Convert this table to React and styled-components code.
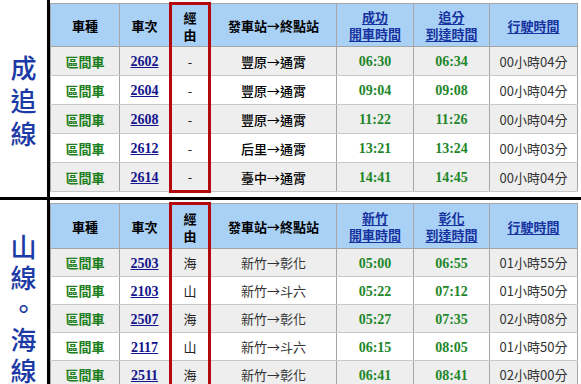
import React from 'react'
import styled, { createGlobalStyle } from 'styled-components'

const GlobalStyle = createGlobalStyle`
    html, body {
        margin: 0;
        padding: 0;
        background: #fff;
    }
    body {
        font-family: "Liberation Serif", "Noto Sans CJK TC", serif;
    }
`

const lines = [
    {
        label: ['成', '追', '線'],
        labelTop: 50,
        labelGap: 33,
        from: '成功',
        to: '追分',
        rows: [
            ['2602', '-', '豐原→通霄', '06:30', '06:34', '00小時04分'],
            ['2604', '-', '豐原→通霄', '09:04', '09:08', '00小時04分'],
            ['2608', '-', '豐原→通霄', '11:22', '11:26', '00小時04分'],
            ['2612', '-', '后里→通霄', '13:21', '13:24', '00小時03分'],
            ['2614', '-', '臺中→通霄', '14:41', '14:45', '00小時04分'],
        ],
    },
    {
        label: ['山', '線', '。', '海', '線'],
        labelTop: 30,
        labelGap: 31,
        from: '新竹',
        to: '彰化',
        rows: [
            ['2503', '海', '新竹→彰化', '05:00', '06:55', '01小時55分'],
            ['2103', '山', '新竹→斗六', '05:22', '07:12', '01小時50分'],
            ['2507', '海', '新竹→彰化', '05:27', '07:35', '02小時08分'],
            ['2117', '山', '新竹→斗六', '06:15', '08:05', '01小時50分'],
            ['2511', '海', '新竹→彰化', '06:41', '08:41', '02小時00分'],
        ],
    },
]

const RED = '#b3080c'

function App() {
    return (
        <>
            <GlobalStyle />
            <Page>
                {lines.map((line, i) => (
                    <Section key={i} $first={i === 0}>
                        <Label $top={line.labelTop} $gap={line.labelGap}>
                            {line.label.map((c, j) => (
                                <React.Fragment key={j}>{j > 0 && <br />}{c}</React.Fragment>
                            ))}
                        </Label>
                        <TableWrap $first={i === 0}>
                            <Table>
                                <colgroup>
                                    <col style={{ width: 69 }} />
                                    <col style={{ width: 51 }} />
                                    <col style={{ width: 39 }} />
                                    <col style={{ width: 127 }} />
                                    <col style={{ width: 77 }} />
                                    <col style={{ width: 76 }} />
                                    <col />
                                </colgroup>
                                <thead>
                                    <HeadRow $h={i === 0 ? 43 : 45}>
                                        <Th>車種</Th>
                                        <Th>車次</Th>
                                        <Th $hl $top>經<br />由</Th>
                                        <Th>發車站→終點站</Th>
                                        <Th><HeadLink>{line.from}<br />開車時間</HeadLink></Th>
                                        <Th><HeadLink>{line.to}<br />到達時間</HeadLink></Th>
                                        <Th><HeadLink>行駛時間</HeadLink></Th>
                                    </HeadRow>
                                </thead>
                                <tbody>
                                    {line.rows.map((r, k) => {
                                        const last = k === line.rows.length - 1
                                        return (
                                            <Row key={k} $alt={k % 2 === 0} $h={i === 0 ? 29 : 28}>
                                                <Td><TrainType>區間車</TrainType></Td>
                                                <Td><TrainNo>{r[0]}</TrainNo></Td>
                                                <Td $hl $bottom={last}><Via>{r[1]}</Via></Td>
                                                <Td><Route $sans={i === 1}>{r[2]}</Route></Td>
                                                <Td><Time>{r[3]}</Time></Td>
                                                <Td><Time>{r[4]}</Time></Td>
                                                <Td><Duration>{r[5]}</Duration></Td>
                                            </Row>
                                        )
                                    })}
                                </tbody>
                            </Table>
                        </TableWrap>
                    </Section>
                ))}
            </Page>
        </>
    )
}

const Page = styled.div`
    width: 581px;
    height: 384px;
    overflow: hidden;
    background: #fff;
`

const Section = styled.div`
    display: flex;
    border-top: ${p => p.$first ? 'none' : '3px solid #000'};
`

const Label = styled.div`
    width: 50px;
    flex: none;
    border-right: 3px solid #000;
    padding-top: ${p => p.$top}px;
    box-sizing: border-box;
    text-align: center;
    font-family: "Noto Sans CJK TC", sans-serif;
    font-size: 26px;
    font-weight: 500;
    line-height: ${p => p.$gap}px;
    color: #1c3aa6;
`

const TableWrap = styled.div`
    flex: 1;
    padding: 2px 0 ${p => p.$first ? 4 : 0}px 0;
`

const Table = styled.table`
    width: 528px;
    table-layout: fixed;
    border-collapse: collapse;
`

const HeadRow = styled.tr`
    height: ${p => p.$h}px;
    background: #a9d0f5;
`

const Row = styled.tr`
    height: ${p => p.$h}px;
    background: ${p => p.$alt ? '#eeeeee' : '#ffffff'};
`

const Th = styled.th`
    padding: 0;
    border: 1px solid #a6a6a6;
    border-left: ${p => p.$hl ? `3px solid ${RED}` : '1px solid #a6a6a6'};
    border-right: ${p => p.$hl ? `3px solid ${RED}` : '1px solid #a6a6a6'};
    border-top: ${p => p.$top ? `3px solid ${RED}` : '1px solid #a6a6a6'};
    font-family: "Noto Sans CJK TC", sans-serif;
    font-size: 13px;
    font-weight: 700;
    line-height: 17px;
    color: #000;
    text-align: center;
    vertical-align: middle;
`

const HeadLink = styled.span`
    color: #1633a0;
    text-decoration: underline;
    text-underline-offset: 2px;
`

const Td = styled.td`
    padding: 0;
    border: 1px solid #b4b4b4;
    border-left: ${p => p.$hl ? `3px solid ${RED}` : '1px solid #a6a6a6'};
    border-right: ${p => p.$hl ? `3px solid ${RED}` : '1px solid #a6a6a6'};
    border-bottom: ${p => p.$bottom ? `3px solid ${RED}` : '1px solid #c8c8c8'};
    text-align: center;
    vertical-align: middle;
    white-space: nowrap;
`

const TrainType = styled.span`
    font-family: "Noto Sans CJK TC", sans-serif;
    font-size: 13px;
    font-weight: 700;
    color: #1c7f1c;
`

const TrainNo = styled.span`
    font-family: "Liberation Serif", serif;
    font-size: 14px;
    font-weight: 700;
    color: #14148c;
    text-decoration: underline;
`

const Via = styled.span`
    font-family: "Noto Sans CJK TC", sans-serif;
    font-size: 13px;
    color: #222;
`

const Route = styled.span`
    font-family: "Noto Sans CJK TC", sans-serif;
    font-size: 13px;
    font-weight: ${p => p.$sans ? 400 : 500};
    color: ${p => p.$sans ? '#333' : '#000'};
`

const Time = styled.span`
    font-family: "Liberation Serif", serif;
    font-size: 14px;
    font-weight: 700;
    color: #22862a;
`

const Duration = styled.span`
    font-family: "Noto Sans CJK TC", sans-serif;
    font-size: 13px;
    color: #333;
`

export default App
